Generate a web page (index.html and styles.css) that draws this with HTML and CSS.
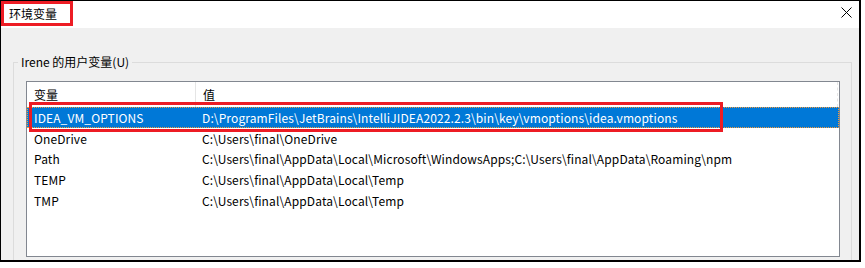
FILE: index.html
```html
<!DOCTYPE html>
<html lang="zh-CN">
<head>
    <meta charset="UTF-8">
    <title>环境变量</title>
    <link rel="stylesheet" href="styles.css">
</head>
<body>
    <div class="window">
        <div class="title-bar">
            <span class="title mark">环境变量</span>
            <span class="close">
                <svg width="11" height="11" viewBox="0 0 11 11">
                    <path d="M0.5 0.5 L10.5 10.5 M10.5 0.5 L0.5 10.5" stroke="#000" stroke-width="1" fill="none"/>
                </svg>
            </span>
        </div>
        <div class="content">
            <fieldset class="group">
                <legend>Irene 的用户变量(U)</legend>
                <div class="list">
                    <div class="list-header">
                        <div class="col col-name">变量</div>
                        <div class="col col-value">值</div>
                    </div>
                    <div class="row selected">
                        <div class="col col-name">IDEA_VM_OPTIONS</div>
                        <div class="col col-value">D:\ProgramFiles\JetBrains\IntelliJIDEA2022.2.3\bin\key\vmoptions\idea.vmoptions</div>
                    </div>
                    <div class="row">
                        <div class="col col-name">OneDrive</div>
                        <div class="col col-value">C:\Users\final\OneDrive</div>
                    </div>
                    <div class="row">
                        <div class="col col-name">Path</div>
                        <div class="col col-value">C:\Users\final\AppData\Local\Microsoft\WindowsApps;C:\Users\final\AppData\Roaming\npm</div>
                    </div>
                    <div class="row">
                        <div class="col col-name">TEMP</div>
                        <div class="col col-value">C:\Users\final\AppData\Local\Temp</div>
                    </div>
                    <div class="row">
                        <div class="col col-name">TMP</div>
                        <div class="col col-value">C:\Users\final\AppData\Local\Temp</div>
                    </div>
                    <div class="row-mark"></div>
                </div>
            </fieldset>
        </div>
    </div>
</body>
</html>
```

FILE: styles.css
```css
/* Windows "环境变量" dialog, cropped */
body {
    margin: 0;
    background: #fff;
    font-family: "Noto Sans CJK SC", "Noto Sans", sans-serif;
    font-size: 12px;
    color: #000;
}

.window {
    width: 858px;
    height: 259px;
    border: 1px solid #000;
    border-right-width: 2px;
    border-bottom-width: 2px;
    display: flex;
    flex-direction: column;
    overflow: hidden;
}

.title-bar {
    height: 27px;
    background: #fff;
    display: flex;
    align-items: flex-start;
    justify-content: space-between;
    flex-shrink: 0;
}

.mark {
    border: 3px solid #ed1c24;
}

.title {
    height: 19px;
    line-height: 19px;
    padding: 0 13px 0 5px;
}

.close {
    margin: 6px 7px 0 0;
    height: 11px;
}

.close svg {
    display: block;
}

.content {
    flex: 1;
    background: #f0f0f0;
    padding: 26px 0 0 12px;
    overflow: hidden;
}

.group {
    width: 837px;
    margin: 0;
    padding: 0;
    border: 1px solid #dcdcdc;
    height: 260px;
}

.group legend {
    margin-left: 4px;
    padding: 0 3px;
    line-height: 16px;
}

.list {
    position: relative;
    margin: 11px 0 0 12px;
    width: 812px;
    height: 174px;
    border: 1px solid #828790;
    background: #fff;
}

.list-header,
.row {
    display: flex;
}

.list-header {
    height: 25px;
    align-items: center;
    border-right: 1px dashed #e5e5e5;
    width: 810px;
}

.list-header .col-name {
    border-right: 1px solid #e5e5e5;
    align-self: stretch;
    display: flex;
    align-items: center;
}

.col {
    padding-left: 7px;
    white-space: nowrap;
}

.row .col {
    letter-spacing: 0.12px;
}

.col-name {
    width: 161px;
    flex-shrink: 0;
}

.row {
    height: 20.75px;
    align-items: center;
}

.row.selected {
    background: #0078d7;
    color: #fff;
    outline: 1px dotted #f39a3c;
    outline-offset: -1px;
}

.row-mark {
    position: absolute;
    left: 2px;
    top: 20px;
    width: 688px;
    height: 24px;
    border: 3px solid #ed1c24;
}
```
